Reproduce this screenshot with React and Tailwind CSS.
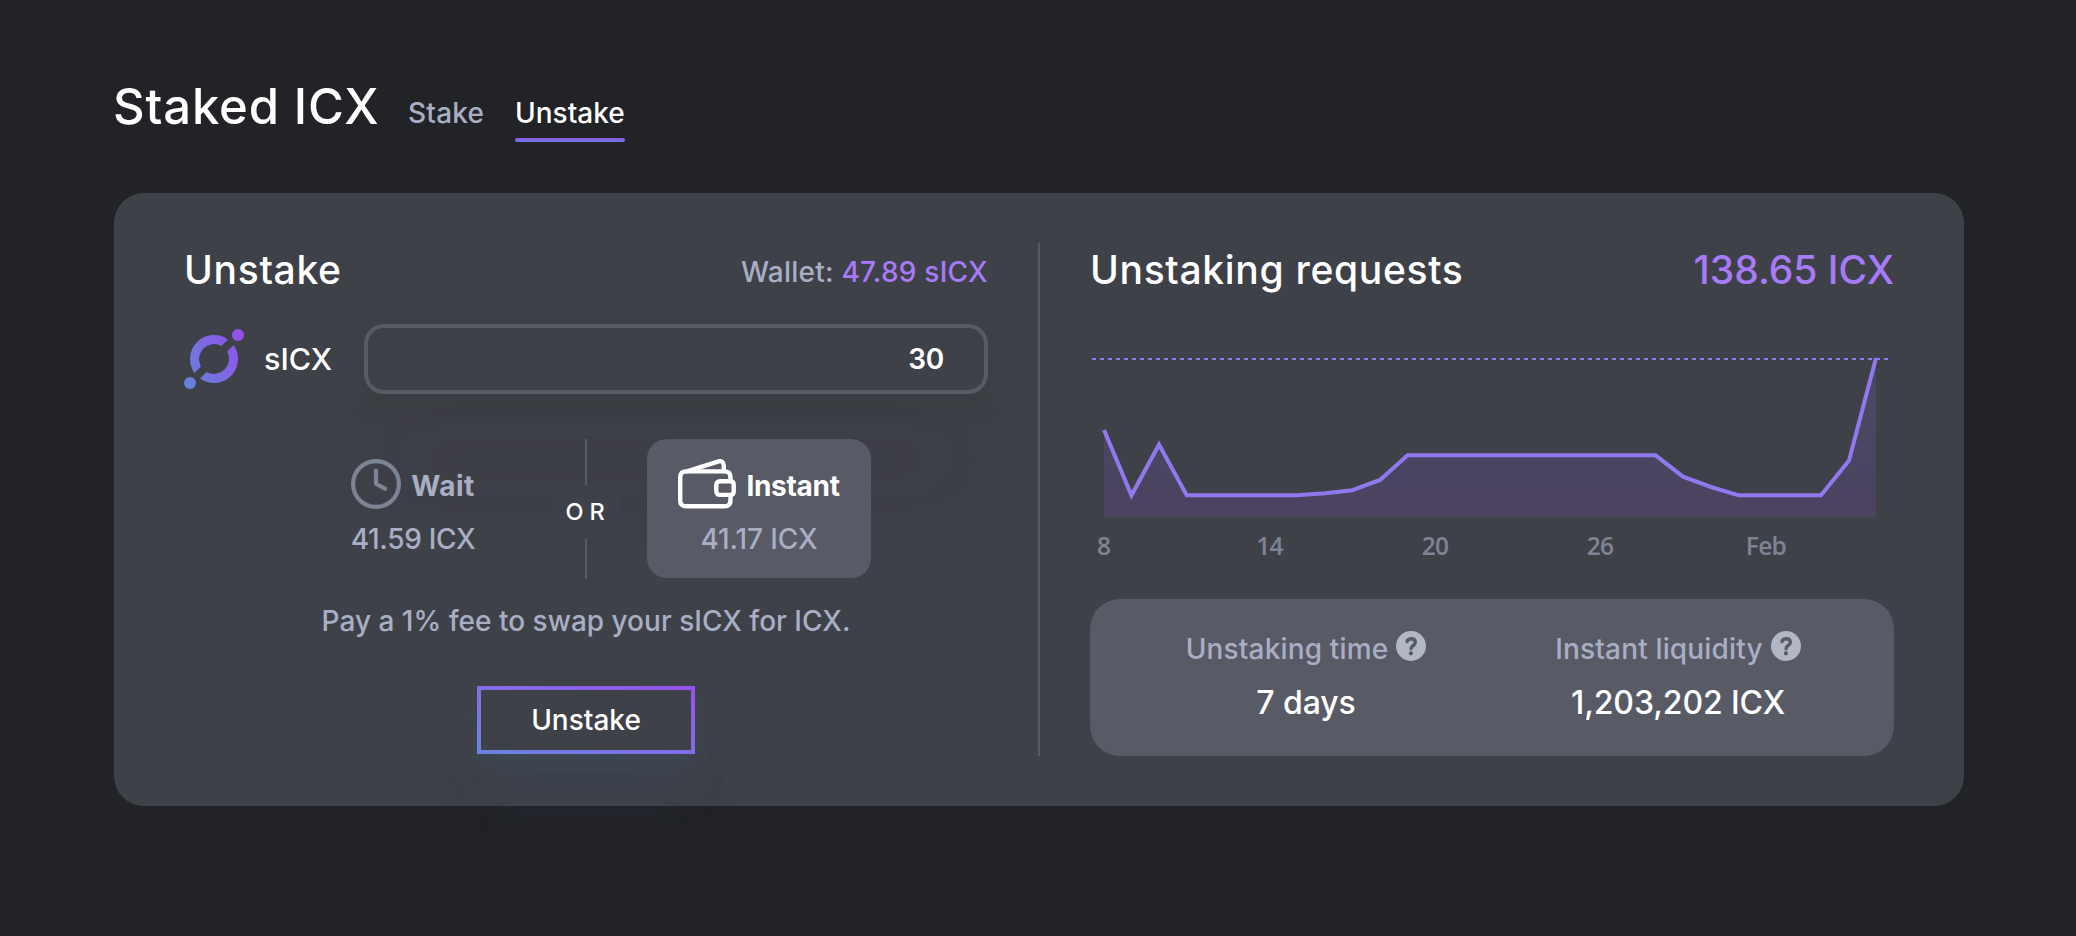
function IconLogo() {
  return (
    <svg className="h-[60px] w-[60px] shrink-0" viewBox="0 0 60 60">
      <defs>
        <linearGradient id="logo" gradientUnits="userSpaceOnUse" x1="3" y1="48" x2="57" y2="12">
          <stop offset="0" stopColor="#6681dc" />
          <stop offset="1" stopColor="#9351ea" />
        </linearGradient>
      </defs>
      <g fill="url(#logo)">
        <path d="M43.9 10.44A24 24 0 0 0 10.44 43.9L16.95 37.39A15 15 0 0 1 37.39 16.95Z" />
        <path d="M49.56 16.1A24 24 0 0 1 16.1 49.56L22.61 43.05A15 15 0 0 0 43.05 22.61Z" />
        <circle cx="54" cy="6" r="6" />
        <circle cx="6" cy="54" r="6" />
      </g>
    </svg>
  );
}

function ClockIcon() {
  return (
    <svg className="h-[50px] w-[50px] shrink-0" viewBox="0 0 50 50" fill="none" stroke="#7d8495" strokeWidth="4.2" strokeLinecap="round" strokeLinejoin="round">
      <circle cx="25" cy="25" r="22.9" />
      <path d="M25 11.5V25L34 29.7" />
    </svg>
  );
}

function WalletIcon() {
  return (
    <svg className="h-[50px] w-[58px] shrink-0" viewBox="0 0 58 50" fill="none" stroke="#ffffff" strokeWidth="4.4" strokeLinecap="round" strokeLinejoin="round">
      <path d="M9 12.3L40.6 2.4C43.6 1.5 45.8 3.4 45.8 6.4V12" />
      <path d="M52.5 22V18.5C52.5 14.6 50.4 12.4 46.5 12.4H8.2C4.3 12.4 2.2 14.6 2.2 18.5V41.2C2.2 45.1 4.3 47.3 8.2 47.3H46.5C50.4 47.3 52.5 45.1 52.5 41.2V36" />
      <path d="M42 22.2H52.3C54.6 22.2 55.7 23.4 55.7 25.7V32.4C55.7 34.7 54.6 35.9 52.3 35.9H42C39.7 35.9 38.2 34.4 38.2 32.1V26C38.2 23.7 39.7 22.2 42 22.2Z" />
    </svg>
  );
}

function QuestionIcon() {
  return (
    <svg className="h-[30px] w-[30px] shrink-0" viewBox="0 0 30 30" fill="none">
      <circle cx="15" cy="15" r="15" fill="#b2b7c6" />
      <path d="M11 10.6C11.6 8.6 13.1 7.7 15.2 7.7C17.7 7.7 19.3 9.1 19.3 11.2C19.3 13 18.3 13.9 16.9 14.8C15.6 15.6 15.1 16.2 15.1 17.8" stroke="#585b66" strokeWidth="3.4" strokeLinecap="round" strokeLinejoin="round" />
      <circle cx="14.9" cy="22.3" r="2.1" fill="#585b66" />
    </svg>
  );
}

const points = [
  [14, 133], [41.5, 198.3], [69, 147.5], [96.7, 198.3], [207, 198.3], [235, 196.2], [262.3, 193.2], [290, 183],
  [317.6, 158.3], [565.6, 158.3], [593, 179.7], [621, 190], [648.6, 198.3], [731, 198.3], [759, 163.5], [786, 61],
];
const line = points.map((p) => p.join(",")).join(" ");
const ticks = [[13.7, "8"], [179.5, "14"], [345, "20"], [510, "26"], [676, "Feb"]];

function RequestsChart() {
  return (
    <svg className="h-[302px] w-[804px]" viewBox="0 0 804 302">
      <defs>
        <linearGradient id="area" gradientUnits="userSpaceOnUse" x1="0" y1="61" x2="0" y2="220">
          <stop offset="0" stopColor="#4a4a62" />
          <stop offset="0.75" stopColor="#4a4460" />
          <stop offset="1" stopColor="#4c4361" />
        </linearGradient>
      </defs>
      <path d="M2 62H798" stroke="#9079ee" strokeWidth="2" strokeDasharray="4 4" />
      <polygon points={`${line} 786,220 14,220`} fill="url(#area)" />
      <polyline points={line} fill="none" stroke="#9079ee" strokeWidth="4" />
      <g fill="#7e8493" fontSize="24.5" fontWeight="600" textAnchor="middle" letterSpacing="-0.7" fontFamily='"Open Sans", sans-serif'>
        {ticks.map(([x, label]) => (
          <text key={label} x={x} y="258">{label}</text>
        ))}
      </g>
    </svg>
  );
}

function Stat({ label, value }) {
  return (
    <div className="flex flex-col items-center">
      <div className="flex gap-[8px]">
        <span className="pt-1 text-[28px] leading-[28px] tracking-[0.15px] text-[#a8afc4]">{label}</span>
        <QuestionIcon />
      </div>
      <div className="mt-6 text-[32px] leading-[32px] tracking-[-0.1px]">{value}</div>
    </div>
  );
}

export default function App() {
  return (
    <div className="h-[936px] w-[2076px] overflow-hidden bg-[#222327] font-['Inter',sans-serif] font-medium whitespace-nowrap text-white">
      <header className="flex h-[193px] items-start pt-[82px] pl-[113px]">
        <h1 className="w-[295px] text-[49px] leading-[49px] tracking-[0.85px]">Staked ICX</h1>
        <nav className="mt-4 flex gap-[31px] text-[28px] leading-[28px]">
          <a className="w-[76px] pt-px tracking-[0.2px] text-[#a8afc4]">Stake</a>
          <a className="flex w-[110px] flex-col pt-px">
            Unstake
            <span className="mt-[11px] h-1 rounded-[2px] bg-linear-to-b from-[#9154e6] to-[#6f7be2]" />
          </a>
        </nav>
      </header>

      <main className="ml-[114px] flex h-[613px] w-[1850px] gap-[50px] rounded-[30px] bg-[#3f4148] px-[70px] py-[50px]">
        <section className="w-[804px]">
          <div className="flex h-[54px] items-center justify-between">
            <h2 className="text-[39px] leading-[54px] tracking-[0.7px]">Unstake</h2>
            <p className="pt-1 text-[28px] leading-[28px] tracking-[0.25px] text-[#a8afc4]">
              Wallet: <span className="text-[#a77af8]">47.89 sICX</span>
            </p>
          </div>

          <div className="mt-[27px] flex h-[70px] items-center">
            <IconLogo />
            <span className="w-[120px] pl-5 text-[30.5px] leading-[30px]">sICX</span>
            <div className="flex h-[70px] w-[624px] items-center justify-end rounded-[20px] border-4 border-[#585b66] bg-[#3f4148] pr-[40px] text-[28px] leading-[28px] font-semibold tracking-[-0.3px] shadow-[0_14px_22px_rgba(45,48,45,0.22),0_100px_80px_-20px_rgba(39,43,52,0.12)]">
              30
            </div>
          </div>

          <div className="relative mt-[45px] flex justify-center">
            <div className="flex h-[139px] w-[224px] flex-col items-center pt-5">
              <div className="flex items-center gap-[10px]">
                <ClockIcon />
                <span className="pt-1 text-[28px] leading-[28px] font-bold tracking-[0.5px] text-[#a8afc4]">Wait</span>
              </div>
              <span className="mt-4 text-[28px] leading-[28px] tracking-[-0.3px] text-[#a8afc4]">41.59 ICX</span>
            </div>
            <div className="flex w-[122px] flex-col items-center">
              <span className="h-[46px] w-0.5 bg-[#585b66]" />
              <span className="flex h-[54px] w-[67px] items-center justify-center bg-[#3f4148] pb-0.5 pl-1 text-[23.5px] leading-[23px] tracking-[6px]">OR</span>
              <span className="h-10 w-0.5 bg-[#585b66]" />
            </div>
            <div className="flex h-[139px] w-[224px] flex-col items-center rounded-[20px] bg-[#585b66] pt-5">
              <div className="flex items-center gap-[10px]">
                <WalletIcon />
                <span className="pt-1 text-[28px] leading-[28px] font-bold tracking-[-0.3px]">Instant</span>
              </div>
              <span className="mt-4 text-[28px] leading-[28px] tracking-[-0.1px] text-[#a8afc4]">41.17 ICX</span>
            </div>
          </div>

          <p className="relative mt-7 text-center text-[28px] leading-[28px] text-[#a8afc4]">
            Pay a 1% fee to swap your sICX for ICX.
          </p>

          <div className="mt-[51px] flex justify-center">
            <button className="h-[68px] w-[218px] bg-linear-to-tr from-[#6884e0] to-[#9650ec] p-1 shadow-[0_12px_20px_rgba(68,120,160,0.12),0_50px_50px_-10px_rgba(60,90,140,0.11),0_110px_60px_rgba(44,56,72,0.08)]">
              <span className="flex h-full items-center justify-center bg-[#3f4148] text-[28px] leading-[28px]">Unstake</span>
            </button>
          </div>
        </section>

        <div className="w-0.5 bg-[#585b66]" />

        <section className="flex w-[804px] flex-col">
          <div className="flex h-[54px] items-center justify-between">
            <h2 className="text-[39px] leading-[54px] tracking-[0.68px]">Unstaking requests</h2>
            <span className="text-[39px] leading-[54px] text-[#a77af8]">138.65 ICX</span>
          </div>
          <RequestsChart />
          <div className="grid h-[157px] grid-cols-2 rounded-[30px] bg-[#585b66] px-[30px] pt-8">
            <Stat label="Unstaking time" value="7 days" />
            <Stat label="Instant liquidity" value="1,203,202 ICX" />
          </div>
        </section>
      </main>
    </div>
  );
}
